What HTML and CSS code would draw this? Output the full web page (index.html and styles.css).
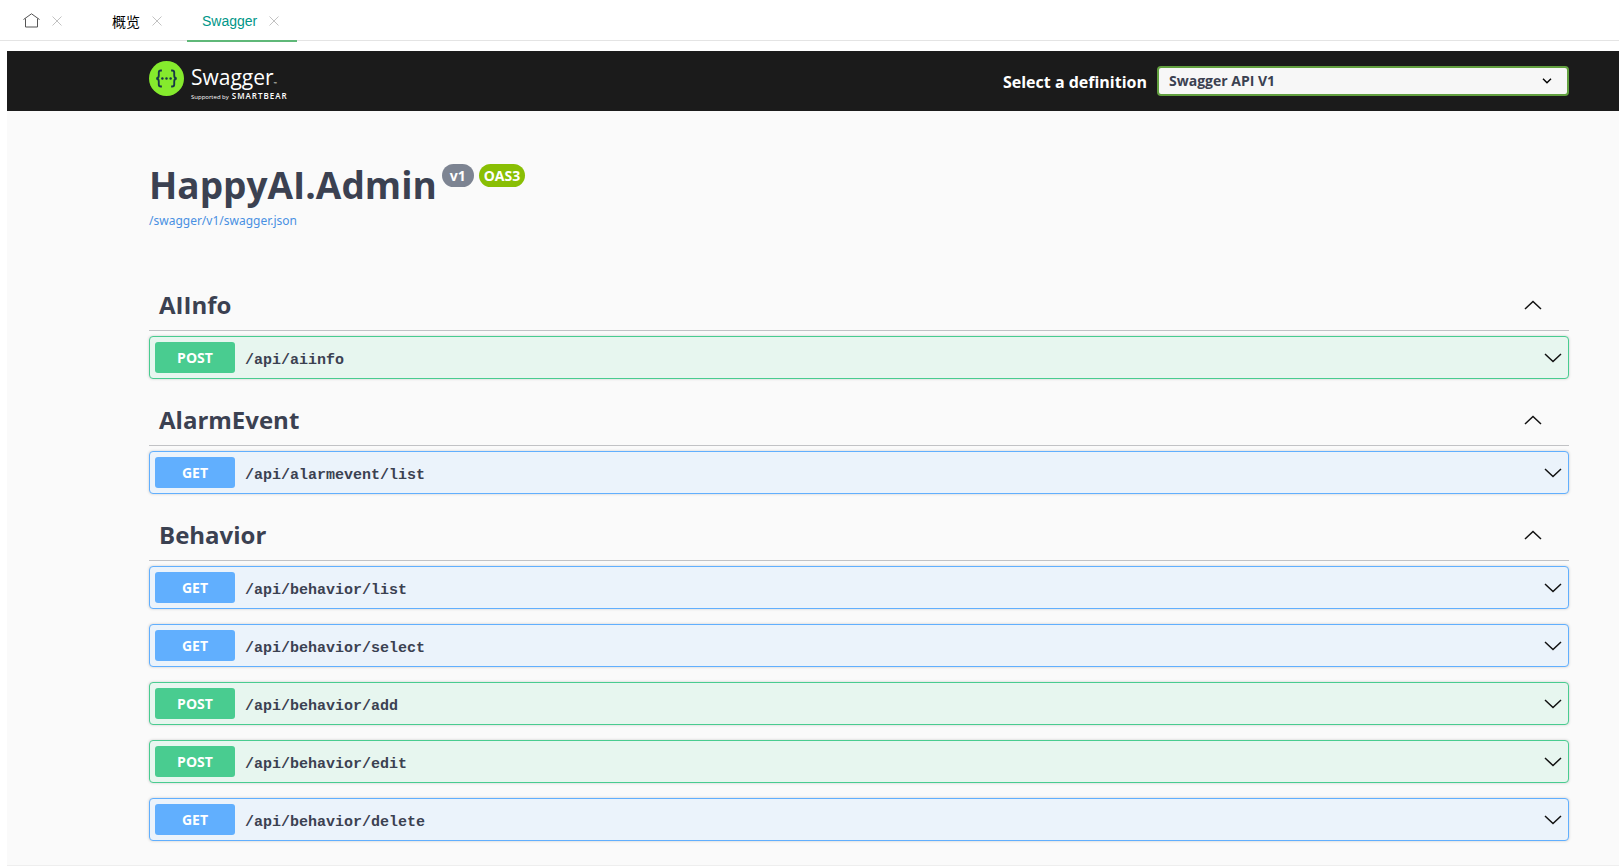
FILE: index.html
```html
<!DOCTYPE html>
<html lang="zh-CN">
<head>
<meta charset="utf-8">
<title>Swagger</title>
<link rel="stylesheet" href="styles.css">
</head>
<body>
<svg class="defs" aria-hidden="true">
  <symbol id="close" viewBox="0 0 10 10"><path d="M.5.5l9 9M9.5.5l-9 9" fill="none" stroke="currentColor"/></symbol>
  <symbol id="down" viewBox="0 0 18 10"><path d="M1 1l8 7.5L17 1" fill="none" stroke="currentColor" stroke-width="1.5"/></symbol>
  <symbol id="up" viewBox="0 0 18 10"><path d="M1 9l8-7.5L17 9" fill="none" stroke="currentColor" stroke-width="1.5"/></symbol>
</svg>
<nav class="tabs">
  <div class="tab tab-home">
    <a href="#" aria-label="Home"><svg class="home" viewBox="0 0 17 15"><path d="M.5 6.500L8.500.8l8 5.700M2.500 5.500v8.500h12V5.500" fill="none" stroke="currentColor"/></svg></a>
    <button class="close" aria-label="Close"><svg><use href="#close"/></svg></button>
  </div>
  <div class="tab">
    <a href="#">概览</a>
    <button class="close" aria-label="Close"><svg><use href="#close"/></svg></button>
  </div>
  <div class="tab active">
    <a href="#">Swagger</a>
    <button class="close" aria-label="Close"><svg><use href="#close"/></svg></button>
  </div>
</nav>
<div class="frame">
  <header class="topbar">
    <a class="logo" href="#">
      <svg class="mark" viewBox="0 0 34 34">
        <circle cx="17" cy="17" r="17" fill="#85ea2d"/>
        <g fill="none" stroke="#173647" stroke-width="1.800">
          <path d="M12.500 9.200h-1q-2 0-2 2v3q0 2.800-2.500 2.800 2.500 0 2.500 2.800v3q0 2 2 2h1"/>
          <path d="M21.500 9.200h1q2 0 2 2v3q0 2.800 2.500 2.800-2.500 0-2.500 2.800v3q0 2-2 2h-1"/>
        </g>
        <g fill="#173647"><circle cx="13" cy="17" r="1.200"/><circle cx="17" cy="17" r="1.200"/><circle cx="21" cy="17" r="1.200"/></g>
      </svg>
      <span class="wordmark">
        <span class="name">Swagger<span class="tm">™</span></span>
        <span class="support">Supported by <b>SMARTBEAR</b></span>
      </span>
    </a>
    <div class="definition">
      <label for="definition">Select a definition</label>
      <div class="select">
        <select id="definition"><option>Swagger API V1</option></select>
        <svg class="arrow" viewBox="0 0 10 6"><path d="M1 .8l4 4 4-4" fill="none" stroke="#000" stroke-width="1.400"/></svg>
      </div>
    </div>
  </header>
  <main class="content">
    <section class="info">
      <div class="title"><h1>HappyAI.Admin</h1><span class="badge">v1</span><span class="badge oas">OAS3</span></div>
      <a class="spec" href="#">/swagger/v1/swagger.json</a>
    </section>
    <section>
      <h2><button class="tag">AIInfo<svg class="chev"><use href="#up"/></svg></button></h2>
      <button class="op post"><span class="method">POST</span><span class="path">/api/aiinfo</span><svg class="chev"><use href="#down"/></svg></button>
    </section>
    <section>
      <h2><button class="tag">AlarmEvent<svg class="chev"><use href="#up"/></svg></button></h2>
      <button class="op get"><span class="method">GET</span><span class="path">/api/alarmevent/list</span><svg class="chev"><use href="#down"/></svg></button>
    </section>
    <section>
      <h2><button class="tag">Behavior<svg class="chev"><use href="#up"/></svg></button></h2>
      <button class="op get"><span class="method">GET</span><span class="path">/api/behavior/list</span><svg class="chev"><use href="#down"/></svg></button>
      <button class="op get"><span class="method">GET</span><span class="path">/api/behavior/select</span><svg class="chev"><use href="#down"/></svg></button>
      <button class="op post"><span class="method">POST</span><span class="path">/api/behavior/add</span><svg class="chev"><use href="#down"/></svg></button>
      <button class="op post"><span class="method">POST</span><span class="path">/api/behavior/edit</span><svg class="chev"><use href="#down"/></svg></button>
      <button class="op get"><span class="method">GET</span><span class="path">/api/behavior/delete</span><svg class="chev"><use href="#down"/></svg></button>
    </section>
  </main>
</div>
</body>
</html>
```
FILE: styles.css
```css
* { box-sizing: border-box; }
body {
  margin: 0;
  min-height: 100vh;
  display: flex;
  flex-direction: column;
  background: #fff;
  color: #3b4151;
  font-family: "Open Sans", "Noto Sans", sans-serif;
}
button { font: inherit; color: inherit; background: none; border: 0; padding: 0; cursor: pointer; }
a { text-decoration: none; color: inherit; }
.defs { display: none; }

.tabs {
  display: flex;
  height: 41px;
  padding-left: 8px;
  border-bottom: 1px solid #e4e4e4;
  font: 14px "Liberation Sans", "Noto Sans CJK SC", sans-serif;
  color: #000;
}
.tab {
  display: flex;
  align-items: center;
  gap: 12px;
  height: 42px;
  padding: 2px 18px 0 15px;
  border-bottom: 2px solid transparent;
}
.tab + .tab { margin-left: 14px; }
.tab-home { padding-right: 17px; }
.tab.active { color: #009688; border-color: #5fb878; margin-left: 7px; }
.tab-home + .tab { padding-left: 19px; }
.home { display: block; width: 17px; height: 15px; margin-bottom: 2px; color: #555; }
.close { display: block; width: 10px; height: 10px; color: #c2c2c2; }
.close svg { display: block; width: 10px; height: 10px; }

.frame {
  flex: 1;
  margin: 10px 0 0 7px;
  background: #fafafa;
  border-bottom: 1px solid #eee;
}
.topbar {
  display: flex;
  align-items: center;
  justify-content: space-between;
  height: 60px;
  padding: 0 50px 0 142px;
  background: #1b1b1b;
  color: #fff;
}
.logo { display: flex; gap: 7px; height: 40px; }
.mark { width: 35px; height: 35px; }
.wordmark { display: flex; flex-direction: column; }
.name { height: 31px; font-size: 21px; line-height: 33px; font-weight: 400; }
.tm { font-size: 4px; }
.support { display: flex; gap: 3px; align-items: baseline; font-size: 6px; line-height: 8px; white-space: nowrap; }
.support b { font-size: 8px; font-weight: 600; letter-spacing: 1px; }
.definition { display: flex; align-items: center; gap: 10px; font-weight: 700; }
.definition label { padding-top: 2px; font-size: 16px; }
.select { position: relative; width: 412px; }
.select select {
  display: block;
  width: 100%;
  height: 30px;
  padding: 0 40px 2px 10px;
  appearance: none;
  border: 2px solid #62a03f;
  border-radius: 4px;
  background: #f7f7f7;
  color: #3b4151;
  font: 700 14px "Open Sans", "Noto Sans", sans-serif;
}
.arrow { position: absolute; right: 17px; top: 12px; width: 10px; height: 6px; }

.content { padding: 48px 50px 0 142px; }
.info { height: 120px; }
.title { display: flex; align-items: flex-start; gap: 5px; height: 50px; }
h1 { margin: 0; font-size: 37px; line-height: 52px; font-weight: 700; }
.badge {
  margin-top: 5px;
  padding: 0 8px;
  border-radius: 12px;
  background: #7d8492;
  color: #fff;
  font-size: 14px;
  line-height: 23px;
  font-weight: 700;
}
.oas { padding: 0 5px; background: #89bf04; }
.spec { display: block; font-family: "Noto Sans", sans-serif; font-size: 12px; line-height: 24px; color: #4990e2; }

h2 { margin: 0 0 5px; font-size: 24px; font-weight: 700; }
.tag {
  display: flex;
  align-items: center;
  justify-content: space-between;
  width: 100%;
  height: 52px;
  padding: 0 27px 0 10px;
  border-bottom: 1px solid #c1c2c5;
}
.chev { width: 18px; height: 10px; color: #111; }
.op {
  display: flex;
  align-items: center;
  width: 100%;
  height: 43px;
  margin-bottom: 15px;
  padding: 0 6px 0 5px;
  border: 1px solid;
  border-radius: 4px;
  box-shadow: 0 0 3px rgba(0, 0, 0, 0.19);
}
.post { border-color: #49cc90; background: #e7f6ef; }
.get { border-color: #61affe; background: #ebf3fb; }
.method {
  width: 80px;
  border-radius: 3px;
  color: #fff;
  font-size: 14px;
  line-height: 31px;
  font-weight: 700;
}
.post .method { background: #49cc90; }
.get .method { background: #61affe; }
.path {
  flex: 1;
  padding: 5px 10px 0;
  text-align: left;
  color: #3b4151;
  font: 600 15px "Liberation Mono", monospace;
}
```
